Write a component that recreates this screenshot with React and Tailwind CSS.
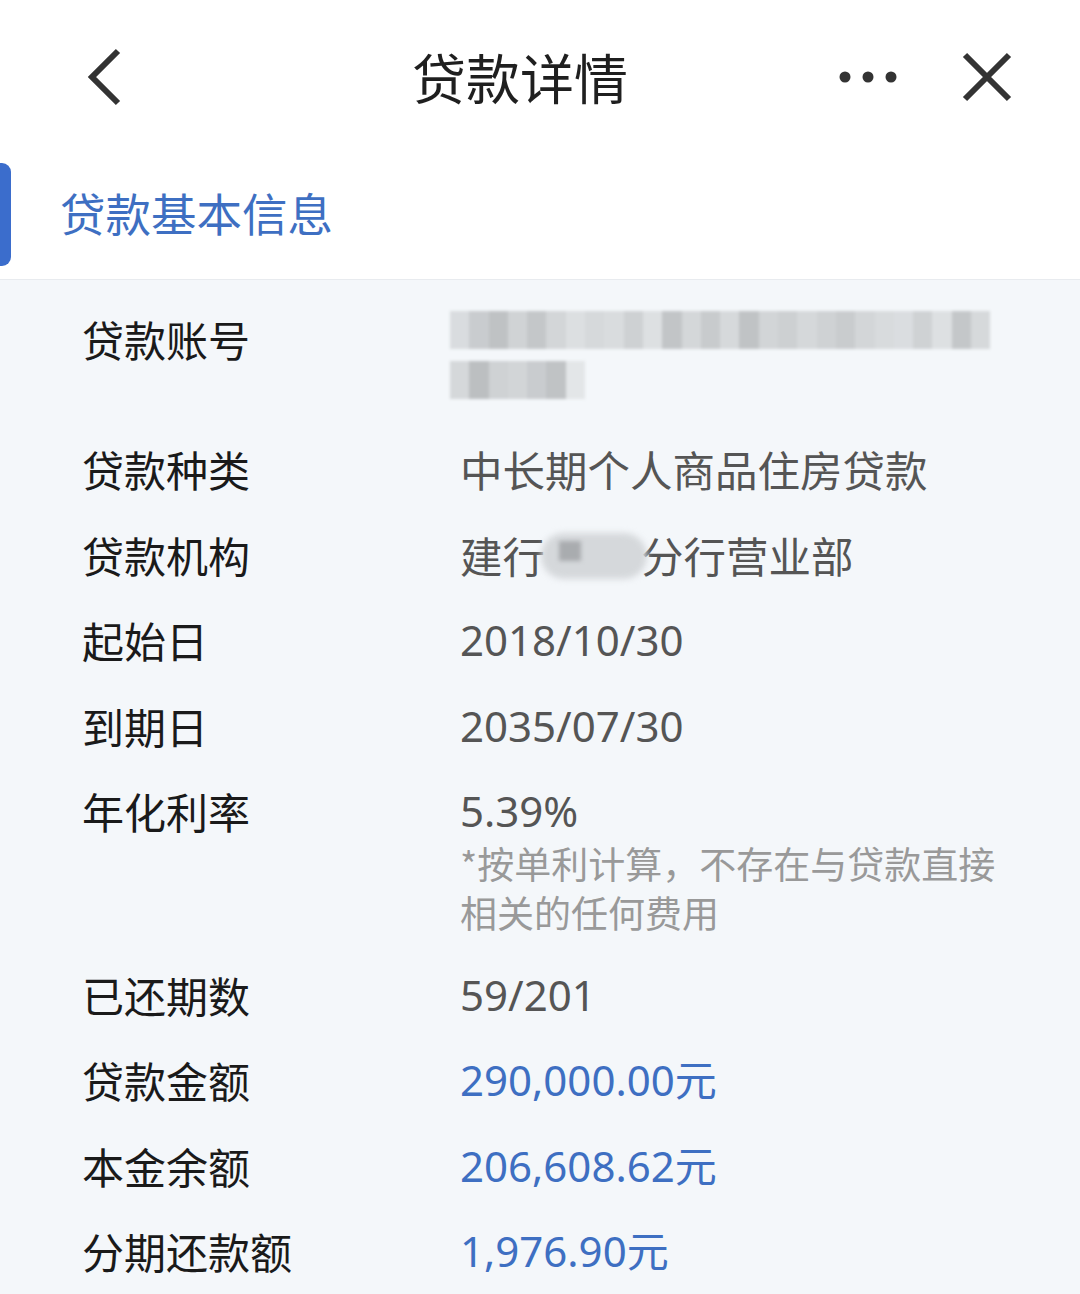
import React from 'react';

const font = { fontFamily: '"Noto Sans CJK SC", "Noto Sans", sans-serif' };
const numFont = { fontFamily: '"Noto Sans", "Noto Sans CJK SC", sans-serif' };

// 模糊处理的账号块
const blurRow1 = [
  '#d9dcdf', '#c9cccf', '#bfc2c4', '#d0d3d5', '#c4c7c9', '#d3d6d8', '#dcdfe1', '#d6d9db', '#d9dcde',
  '#ced1d3', '#dde0e2', '#c2c5c7', '#d4d7d9', '#c8cbcd', '#d6d9db', '#c0c3c5', '#d2d5d7', '#cdd0d2',
  '#d5d8da', '#cfd2d4', '#c9ccce', '#d3d6d8', '#d8dbdd', '#dadde0', '#cfd2d4', '#dde0e2', '#c4c7c9',
  '#d6d9db',
];
const blurRow2 = ['#d5d8da', '#bcbfc1', '#cfd2d4', '#d2d5d7', '#c9cccf', '#c0c3c5', '#e3e6e8'];

function BackIcon() {
  return (
    <svg width="40" height="60" viewBox="0 0 40 60">
      <path d="M34 4 L8 30 L34 56" fill="none" stroke="#333" strokeWidth="6" />
    </svg>
  );
}

function DotsIcon() {
  return (
    <svg width="60" height="14" viewBox="0 0 60 14">
      <circle cx="7" cy="7" r="5.5" fill="#333" />
      <circle cx="30" cy="7" r="5.5" fill="#333" />
      <circle cx="53" cy="7" r="5.5" fill="#333" />
    </svg>
  );
}

function CloseIcon() {
  return (
    <svg width="50" height="50" viewBox="0 0 50 50">
      <path d="M3 3 L47 47 M47 3 L3 47" fill="none" stroke="#333" strokeWidth="6" />
    </svg>
  );
}

function Row({ label, children }) {
  return (
    <div className="flex py-[15px]">
      <div className="w-[378px] shrink-0 text-[42px] leading-[55.5px] text-[#1a1a1a]">{label}</div>
      <div className="flex-1">{children}</div>
    </div>
  );
}

function Num({ children, blue }) {
  return (
    <div
      className={blue ? 'text-[42px] leading-[55.5px] text-[#3e6fc2]' : 'text-[42px] leading-[55.5px] text-[#555]'}
      style={numFont}
    >
      {children}
    </div>
  );
}

export default function App() {
  return (
    <div className="w-[1080px] h-[1294px] overflow-hidden bg-[#f4f7fa]" style={font}>
      {/* 顶部栏 */}
      <div className="bg-white">
        <div className="relative flex h-[154px] items-center justify-between pl-[84px] pr-[68px]">
          <BackIcon />
          <div className="absolute left-0 right-[40px] text-center text-[54px] leading-[154px] text-[#1f1f1f] pointer-events-none">
            贷款详情
          </div>
          <div className="flex items-center gap-[64px]">
            <DotsIcon />
            <CloseIcon />
          </div>
        </div>

        {/* 分组标题 */}
        <div className="flex h-[126px] items-start border-b border-[#e8ebef]">
          <div className="mt-[9px] h-[103px] w-[11px] rounded-r-[9px] bg-[#3b6dcc]" />
          <div className="ml-[49px] mt-[28px] text-[45.5px] leading-[60px] text-[#3e6fc2]">贷款基本信息</div>
        </div>
      </div>

      {/* 详情列表 */}
      <div className="pl-[82px] pr-[40px] pt-[16px]">
        <Row label="贷款账号">
          <div className="flex flex-col -ml-[10px] blur-[1.5px]">
            <div className="flex h-[38px]">
              {blurRow1.map((c, i) => (
                <div key={i} className="h-full w-[19.3px]" style={{ backgroundColor: c }} />
              ))}
            </div>
            <div className="h-[12px]" />
            <div className="flex h-[38px]">
              {blurRow2.map((c, i) => (
                <div key={i} className="h-full w-[19.3px]" style={{ backgroundColor: c }} />
              ))}
            </div>
            <div className="h-[12px]" />
          </div>
        </Row>

        <Row label="贷款种类">
          <div className="text-[42.5px] leading-[55.5px] text-[#555]">中长期个人商品住房贷款</div>
        </Row>

        <Row label="贷款机构">
          <div className="flex text-[42.5px] leading-[55.5px] text-[#555]">
            <span>建行</span>
            <span className="relative inline-block w-[96px]">
              <span className="absolute left-[-4px] top-[6px] h-[46px] w-[106px] rounded-[24px] bg-[#d5d8db] blur-[3px]" />
              <span className="absolute left-[14px] top-[14px] h-[20px] w-[22px] bg-[#a9acaf] blur-[2px]" />
            </span>
            <span>分行营业部</span>
          </div>
        </Row>

        <Row label="起始日">
          <Num>2018/10/30</Num>
        </Row>

        <Row label="到期日">
          <Num>2035/07/30</Num>
        </Row>

        <Row label="年化利率">
          <Num>5.39%</Num>
          <div className="text-[37px] leading-[49px] text-[#999]">
            *按单利计算，不存在与贷款直接
            <br />
            相关的任何费用
          </div>
        </Row>

        <Row label="已还期数">
          <Num>59/201</Num>
        </Row>

        <Row label="贷款金额">
          <Num blue>290,000.00元</Num>
        </Row>

        <Row label="本金余额">
          <Num blue>206,608.62元</Num>
        </Row>

        <Row label="分期还款额">
          <Num blue>1,976.90元</Num>
        </Row>
      </div>
    </div>
  );
}
